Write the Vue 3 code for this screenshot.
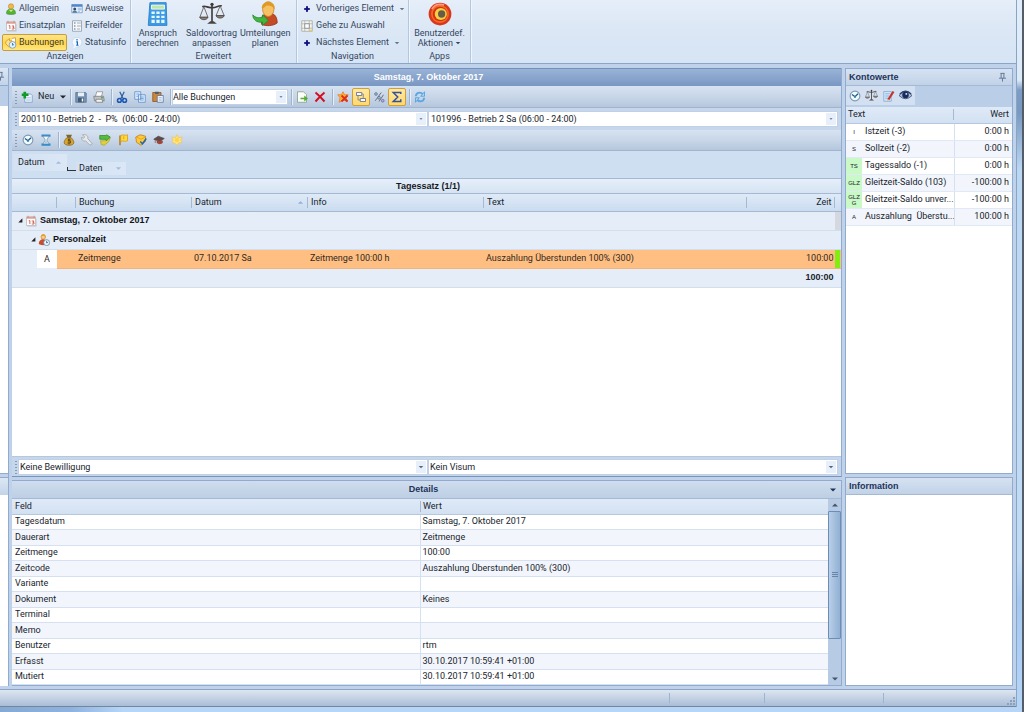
<script setup>
import { h, ref } from 'vue'

const art = {
  person: '<ellipse cx="8" cy="15" rx="6" ry="1" fill="#b9c8d8"/><path d="M2 14c0-5 3-6 6-6s6 1 6 6c-3 1.500-9 1.500-12 0z" fill="#55b52d" stroke="#2e8718" stroke-width=".7"/><path d="M5 9l3 3 3-3" fill="#c4eda0"/><circle cx="8" cy="4.500" r="3.500" fill="#f2b84f" stroke="#b87920" stroke-width=".7"/>',
  calendar: '<path d="M2 3h12v11H2z" fill="#fff" stroke="#b8b4b8"/><path d="M2 2h12v3H2z" fill="#e0a094"/><path d="M4 1v3M12 1v3" stroke="#999"/><path d="M5 7.500h1.500V12M9 8h3l-1.500 2h1.500v2H9" fill="none" stroke="#cc5a45" stroke-width="1.200"/><path d="M3 15h12V5" stroke="#c4c4cc" fill="none"/>',
  booking: '<path d="M1 6l5-4v3h3v8H5L1 9z" fill="#fce28b" stroke="#d39320"/><path d="M9 2l5-1v9h-3" fill="#fff" stroke="#c88d31"/><circle cx="10" cy="10.500" r="4.500" fill="#dff2ff" stroke="#7591ad"/><path d="M10 8v3l2-1" fill="none" stroke="#285f94"/>',
  card: '<path d="M1 2h14v11H1z" fill="#e8f3ff" stroke="#6a93c6"/><path d="M1 2h14v3H1z" fill="#4f86cc"/><circle cx="5" cy="8" r="2" fill="#394c66"/><path d="M2 13c0-4 6-4 6 0" fill="#5f7894"/><path d="M9 7h5M9 9h5M9 11h3" stroke="#7ba6d6"/>',
  fields: '<path d="M2 1h12v14H2z" fill="#f6f7f8" stroke="#8694a5"/><path d="M4 3h2v2H4zM4 7h2v2H4zM4 11h2v2H4z" fill="#879aac"/><path d="M8 4h5M8 8h5M8 12h4" stroke="#8595a5"/>',
  info: '<circle cx="8" cy="7" r="6.500" fill="#f4faff" stroke="#c1d5e8"/><path d="M4 12l-1 3 5-2" fill="#f4faff"/><path d="M8 2.500v2M7 6.500h1.500v5M7 11h3" stroke="#1661c3" stroke-width="1.600" fill="none"/>',
  diamond: '<path d="M8 3l4 5-4 5-4-5z" fill="#101080"/><path d="M2 8h12M8 2v12" stroke="#101080" stroke-width="3"/>',
  goto: '<path d="M1 1h14v14H1z" fill="#f7f4e8" stroke="#9ea4a8"/><path d="M1 5h14M1 11h14M5 1v14M11 1v14" stroke="#9b9fa6" stroke-width=".8"/><path d="M5 5h6v6H5z" fill="#fff" stroke="#788088"/><path d="M11 13h4v2h-4z" fill="#e8cc5c"/>',
  calc: '<path d="M6 2h20l1 28H4z" fill="#3d9be4" stroke="#237cc8"/><path d="M8 5h16v5H8z" fill="#bfe6a8" stroke="#fff"/><path d="M8 13h4v3H8zM14 13h4v3h-4zM20 13h4v3h-4zM8 18h4v3H8zM14 18h4v3h-4zM20 18h4v3h-4zM8 23h4v4H8zM14 23h4v4h-4zM20 23h4v4h-4z" fill="#e5f7ff"/>',
  scales: '<path d="M16 3v23M4 7c4-2 7 2 12 1 4 1 8-3 12-2" stroke="#403a38" stroke-width="2" fill="none"/><circle cx="16" cy="4" r="2" fill="#403a38"/><path d="M10 28h12l-4-3h-4z" fill="#4a4240"/><path d="M6 7L1 20h10L6 7M26 6l-5 12h10L26 6" fill="none" stroke="#5b514d"/><path d="M1 20c1 4 9 4 10 0zM21 18c1 4 9 4 10 0z" fill="#8e8178" stroke="#4a4240"/>',
  transfer: '<path d="M12 29c-2-9 1-14 9-14s10 6 10 12c-5 4-14 4-19 2z" fill="#c54b24" stroke="#8f3219"/><ellipse cx="20" cy="10" rx="7" ry="9" fill="#f6c164" stroke="#c68830"/><path d="M12 9c0-11 17-11 16 1-3-4-8-5-11-4-1 2-3 2-5 3z" fill="#e19926"/><path d="M1 17c3 4 8 4 12 3v-3l7 7-7 6v-4C6 27 1 23 1 17z" fill="#43b63f" stroke="#238b2c"/>',
  target: '<circle cx="16" cy="16" r="14" fill="#d8371d"/><circle cx="16" cy="16" r="11" fill="#ef6d25"/><circle cx="16" cy="16" r="9" fill="#d92e16"/><circle cx="17" cy="16" r="7.500" fill="#f4d046"/><circle cx="18" cy="16" r="4.500" fill="#665d45"/><path d="M6 10Q11 2 21 5" stroke="#ff9c7d" stroke-width="2" fill="none"/>',
  add: '<path d="M5 4h8l2 2v9H5z" fill="#e8f3ff" stroke="#7598c8"/><path d="M7 9h6M7 12h6" stroke="#9bb6d8"/><path d="M5 1v9M1 5h9" stroke="#129a28" stroke-width="3.500"/>',
  save: '<path d="M1 2h13l1 1v12H1z" fill="#7695b8" stroke="#55708f"/><path d="M4 2h8v5H4z" fill="#e8f0f6"/><path d="M4 9h8v6H4z" fill="#445b74"/><path d="M9 10h2v4H9z" fill="#fff"/>',
  print: '<path d="M5 1h8l-2 7H3z" fill="#fff" stroke="#888"/><path d="M1 7h13l1 6H2z" fill="#c2c4c7" stroke="#75797e"/><path d="M4 11h8l1 4H4z" fill="#f4f5ec" stroke="#777"/><path d="M11 9h2" stroke="#35a04a" stroke-width="2"/>',
  cut: '<path d="M5 1l5 10M11 1L6 11" stroke="#355f9c" stroke-width="1.700"/><circle cx="4.500" cy="12.500" r="2.500" fill="none" stroke="#1957b3" stroke-width="2"/><circle cx="11.500" cy="12.500" r="2.500" fill="none" stroke="#1957b3" stroke-width="2"/>',
  copy: '<path d="M1 1h8v10H1zM6 5h9v10H6z" fill="#e0efff" stroke="#5586c6"/><path d="M3 4h4M3 7h3M8 8h5M8 10h5M8 12h5" stroke="#5e91cb"/>',
  paste: '<path d="M1 2h11v12H1z" fill="#cc8738" stroke="#86511c"/><path d="M4 1h5v3H4z" fill="#555f69"/><path d="M7 6h8v9H7z" fill="#eef5ff" stroke="#526f9e"/><path d="M9 9h4M9 12h4" stroke="#809bbe"/>',
  exportDoc: '<path d="M2 1h8l4 4v10H2z" fill="#fbfff8" stroke="#829780"/><path d="M6 9h5V6l5 4-5 4v-3H6z" fill="#51ad35"/>',
  cross: '<path d="M2 2q5 4 12 12M14 2Q8 7 2 14" stroke="#d20f20" stroke-width="2.600" fill="none"/>',
  starX: '<path d="M1 5l5 0 2-4 2 4h5l-3 4 2 5-6-2-5 3 1-6z" fill="#ffb52b" stroke="#e77925"/><path d="M6 6l8 8M14 6l-8 8" stroke="#e02d20" stroke-width="2.500"/>',
  tree: '<path d="M2 2h7v4H2zM7 10h7v4H7z" fill="#f5f8fc" stroke="#596273"/><path d="M4 6v6h3M9 4h2v6" stroke="#68788b" fill="none"/>',
  percent: '<path d="M3 13L11 2M8 14l6-9" stroke="#5b6570" stroke-width="1.200"/><circle cx="4" cy="4" r="1.800" fill="#acc0d6" stroke="#566b83"/><circle cx="8" cy="9" r="1.800" fill="#acc0d6" stroke="#566b83"/><circle cx="13" cy="13" r="1.800" fill="#b5b3db" stroke="#66609b"/>',
  sigma: '<path d="M13 4V2H3l6 6-6 6h10v-3" stroke="#36519a" stroke-width="2" fill="none"/>',
  refresh: '<path d="M2.500 7c0-5 6-6 9-3M13.500 9c0 5-6 6-9 3" fill="none" stroke="#59a6e2" stroke-width="2.400"/><path d="M14 1v6H9zM2 15V9h5z" fill="#a9d8fa" stroke="#4698d8"/>',
  clock: '<circle cx="8" cy="8" r="6.500" fill="#eefaff" stroke="#8199b1" stroke-width="1.500"/><path d="M4 6l4 3 4-4" fill="none" stroke="#255783" stroke-width="1.700"/><circle cx="8" cy="9" r="1.500" fill="#2f80ad"/>',
  hourglass: '<path d="M2 2h12M2 14h12" stroke="#318bce" stroke-width="3"/><path d="M4 3h8L9 8l3 5H4l3-5z" fill="#effaff" stroke="#7395ad"/><path d="M8 8l3 5H5z" fill="#b4cbdc"/>',
  money: '<path d="M5 5c-5 5-5 10 3 10s8-5 3-10z" fill="#daa42b" stroke="#806322"/><path d="M4 1h8l-2 4H6z" fill="#7c6331"/><path d="M10 7H7v2h3v3H6M8 6v8" stroke="#493d24" fill="none"/>',
  wrench: '<path d="M2 1l3 3-2 2-2-2c-1 5 3 6 5 5l6 6 3-2-6-7c1-4-3-6-7-5z" fill="#e6e8e9" stroke="#999fa5"/>',
  arrows: '<path d="M2 9h7V6l6-1-2 5-6 5-4-1z" fill="#e5cf38" stroke="#a3a832"/><path d="M1 2h8l1-1 5 3-5 5-1-2H1z" fill="#55bd40" stroke="#31892b"/>',
  flag: '<path d="M4 2v13" stroke="#b47a16" stroke-width="2"/><path d="M5 2c4-2 5 1 9-1v8c-4 2-5-1-9 1z" fill="#ffdc33" stroke="#d5961f"/><path d="M9 3v4" stroke="#d19421"/>',
  shield: '<path d="M1 4l6-3 7 2v7l-6 5-6-4z" fill="#ffca38" stroke="#bd7517"/><path d="M2 4l6 3 6-3" fill="none" stroke="#e39722"/><path d="M7 10l3 3 5-7" fill="none" stroke="#226bb1" stroke-width="2"/>',
  cap: '<path d="M1 7l6-4 8 3-6 4z" fill="#5d4a49" stroke="#594846"/><path d="M5 9h8v3c-2 2-6 2-8 0z" fill="#a24439"/><path d="M3 8v4" stroke="#71635a"/>',
  sun: '<path d="M8 1l2 4 5-1-2 4 2 3-5 1-2 3-3-3-4-1 2-3-2-4 5 1z" fill="#ffe584" stroke="#f0c659"/><circle cx="8" cy="8" r="3" fill="#ffd64a"/>',
  staff: '<circle cx="7" cy="4" r="3" fill="#f7c98d" stroke="#d78a1d"/><path d="M4 3c1-4 7-3 6 1-2-2-3-2-6-1" fill="#e59d21"/><path d="M1 13c0-8 11-8 11 0-2 2-8 3-11 0z" fill="#ca4c2a"/><circle cx="11.500" cy="11.500" r="4" fill="#eaf8ff" stroke="#5c7fa1"/><path d="M11.500 9v3l2-1" stroke="#355777" fill="none"/>',
  edit: '<path d="M1 2h10v13H1z" fill="#cfe5fb" stroke="#83a8d0"/><path d="M3 5h6M3 8h5M3 11h4" stroke="#7ca5d0"/><path d="M14 2l-7 11" stroke="#c5342f" stroke-width="3"/><path d="M6 12l-1 3 3-2" fill="#eebb80"/>',
  eye: '<path d="M0 8q8-10 16 0-8 8-16 0z" fill="#b1bdd3" stroke="#394d78"/><circle cx="8" cy="7.500" r="4" fill="#192c60"/><circle cx="9" cy="6" r="1.200" fill="#d8e8ff"/><path d="M1 6q7-7 14 0" fill="none" stroke="#293e67" stroke-width="1.500"/>',
  pin: '<path d="M5 2h6M6 2v7M10 2v7M3 9h10M8 9v5" fill="none" stroke="#5a708e" stroke-width="1.300"/>',
  fold: '<path d="M14 1v13H1z" fill="#222"/>',
  down: '<path d="M2 5h12L8 11z" fill="currentColor"/>',
  up: '<path d="M2 11h12L8 5z" fill="currentColor"/>',
}
const Icon = (p) =>
  h('svg', {
    width: p.size || 12,
    height: p.size || 12,
    viewBox: p.large ? '0 0 32 32' : '0 0 16 16',
    'aria-hidden': 'true',
    innerHTML: art[p.name],
  })
Icon.props = { name: String, size: Number, large: Boolean }

const views = [
  ['person', 'Allgemein'], ['card', 'Ausweise'],
  ['calendar', 'Einsatzplan'], ['fields', 'Freifelder'],
  ['booking', 'Buchungen'], ['info', 'Statusinfo'],
]
const activeView = ref('Buchungen')
const extended = [
  ['calc', 'Anspruch', 'berechnen'],
  ['scales', 'Saldovortrag', 'anpassen'],
  ['transfer', 'Umteilungen', 'planen'],
]
const editTools = [['save', 'Speichern'], ['print', 'Drucken'], null, ['cut', 'Ausschneiden'], ['copy', 'Kopieren'], ['paste', 'Einfügen'], null]
const listTools = [null, ['exportDoc', 'Exportieren'], ['cross', 'Löschen'], null, ['starX', 'Filter aufheben'], ['tree', 'Gruppieren', true], ['percent', 'Prozent'], ['sigma', 'Summen', true], null, ['refresh', 'Aktualisieren']]
const typeTools = [['clock', 'Zeit'], ['hourglass', 'Dauer'], null, ['money', 'Spesen'], ['wrench', 'Korrektur'], ['arrows', 'Umbuchung'], ['flag', 'Markierung'], ['shield', 'Bewilligung'], ['cap', 'Ausbildung'], ['sun', 'Feiertag']]
const accounts = [
  ['I', 'Istzeit (-3)', '0:00 h'],
  ['S', 'Sollzeit (-2)', '0:00 h'],
  ['TS', 'Tagessaldo (-1)', '0:00 h', true],
  ['GLZ', 'Gleitzeit-Saldo (103)', '-100:00 h', true],
  ['GLZ\nG', 'Gleitzeit-Saldo unver...', '-100:00 h', true],
  ['A', 'Auszahlung  Überstu...', '100:00 h'],
]
const details = [
  ['Tagesdatum', 'Samstag, 7. Oktober 2017'], ['Dauerart', 'Zeitmenge'], ['Zeitmenge', '100:00'],
  ['Zeitcode', 'Auszahlung Überstunden 100% (300)'], ['Variante', ''], ['Dokument', 'Keines'],
  ['Terminal', ''], ['Memo', ''], ['Benutzer', 'rtm'],
  ['Erfasst', '30.10.2017 10:59:41 +01:00'], ['Mutiert', '30.10.2017 10:59:41 +01:00'],
]
</script>

<template>
  <div class="desktop">
    <div class="window">
      <header class="ribbon">
        <section class="group g-view">
          <div class="views">
            <button v-for="v in views" :key="v[1]" :class="{ active: activeView === v[1] }" @click="activeView = v[1]"><Icon :name="v[0]" /><span>{{ v[1] }}</span></button>
          </div>
          <h2>Anzeigen</h2>
        </section>
        <section class="group g-ext">
          <div class="bigs">
            <button v-for="e in extended" :key="e[1]" class="big"><Icon :name="e[0]" :size="26" large /><span>{{ e[1] }}<br />{{ e[2] }}</span></button>
          </div>
          <h2>Erweitert</h2>
        </section>
        <section class="group g-nav">
          <div class="navs">
            <button><Icon name="diamond" :size="8" /><span>Vorheriges Element</span><Icon name="down" :size="6" /></button>
            <button><Icon name="goto" /><span>Gehe zu Auswahl</span></button>
            <button><Icon name="diamond" :size="8" /><span>Nächstes Element</span><Icon name="down" :size="6" /></button>
          </div>
          <h2>Navigation</h2>
        </section>
        <section class="group g-apps">
          <div class="bigs">
            <button class="big"><Icon name="target" :size="26" large /><span>Benutzerdef.<br />Aktionen <Icon name="down" :size="6" /></span></button>
          </div>
          <h2>Apps</h2>
        </section>
      </header>

      <div class="workspace">
        <aside class="stub">
          <div class="stub-top"><div class="stub-head"><Icon name="pin" :size="11" /></div><div class="stub-tools"></div></div>
          <div class="stub-bottom"><div class="stub-head"></div></div>
        </aside>

        <main class="center">
          <section class="bookings">
            <h1>Samstag, 7. Oktober 2017</h1>
            <div class="toolbar">
              <i class="grip"></i>
              <button class="new"><Icon name="add" /><span>Neu</span><Icon name="down" :size="8" /></button>
              <i class="sep"></i>
              <template v-for="(t, i) in editTools" :key="i"><button v-if="t" class="tool" :aria-label="t[1]"><Icon :name="t[0]" /></button><i v-else class="sep"></i></template>
              <label class="combo filter"><select aria-label="Filter"><option>Alle Buchungen</option></select><Icon name="down" :size="5" /></label>
              <template v-for="(t, i) in listTools" :key="'l' + i"><button v-if="t" class="tool" :class="{ on: t[2] }" :aria-label="t[1]"><Icon :name="t[0]" /></button><i v-else class="sep"></i></template>
            </div>
            <div class="pair">
              <i class="grip"></i>
              <label class="combo"><select aria-label="Arbeitsplan"><option>200110 - Betrieb 2&nbsp; -&nbsp; P%&nbsp; (06:00 - 24:00)</option></select><Icon name="down" :size="5" /></label>
              <label class="combo"><select aria-label="Tagesplan"><option>101996 - Betrieb 2 Sa (06:00 - 24:00)</option></select><Icon name="down" :size="5" /></label>
            </div>
            <div class="toolbar types">
              <i class="grip"></i>
              <template v-for="(t, i) in typeTools" :key="i"><button v-if="t" class="tool" :aria-label="t[1]"><Icon :name="t[0]" /></button><i v-else class="sep"></i></template>
            </div>
            <div class="grouping">
              <button class="chip">Datum <Icon name="up" :size="7" /></button>
              <i class="elbow"></i>
              <button class="chip low">Daten <Icon name="down" :size="7" /></button>
            </div>
            <h2 class="band">Tagessatz (1/1)</h2>
            <table class="records">
              <colgroup><col class="c1" /><col class="c2" /><col class="c3" /><col class="c3" /><col class="c5" /><col /><col class="c7" /><col class="c8" /></colgroup>
              <thead>
                <tr><th><span></span></th><th><span></span></th><th><span>Buchung</span></th><th><span>Datum<Icon name="up" :size="7" /></span></th><th><span>Info</span></th><th><span>Text</span></th><th class="num"><span>Zeit</span></th><th></th></tr>
              </thead>
              <tbody>
                <tr class="node"><td colspan="7"><div class="l1"><Icon name="fold" :size="5" /><Icon name="calendar" /><b>Samstag, 7. Oktober 2017</b></div></td><td class="thumb"></td></tr>
                <tr class="node"><td colspan="8"><div class="l2"><Icon name="fold" :size="5" /><Icon name="staff" /><b>Personalzeit</b></div></td></tr>
                <tr class="hit"><td class="kind"><span>A</span></td><td></td><td>Zeitmenge</td><td>07.10.2017 Sa</td><td>Zeitmenge 100:00 h</td><td>Auszahlung Überstunden 100% (300)</td><td class="num">100:00</td><td class="ok"></td></tr>
                <tr class="sum"><td colspan="7" class="num"><b>100:00</b></td><td></td></tr>
              </tbody>
            </table>
            <div class="blank"></div>
            <div class="pair approve">
              <i class="grip"></i>
              <label class="combo"><select aria-label="Bewilligung"><option>Keine Bewilligung</option></select><Icon name="down" :size="6" /></label>
              <label class="combo"><select aria-label="Visum"><option>Kein Visum</option></select><Icon name="down" :size="6" /></label>
            </div>
          </section>

          <section class="details">
            <div class="details-head"><h2>Details</h2><button aria-label="Menü"><Icon name="down" :size="8" /></button></div>
            <div class="details-body">
              <table>
                <thead><tr><th>Feld</th><th><span>Wert</span></th></tr></thead>
                <tbody><tr v-for="d in details" :key="d[0]"><td>{{ d[0] }}</td><td>{{ d[1] }}</td></tr></tbody>
              </table>
              <div class="scroll">
                <button aria-label="Nach oben"><Icon name="up" :size="8" /></button>
                <div class="track"><div class="handle"><i></i></div></div>
                <button aria-label="Nach unten"><Icon name="down" :size="8" /></button>
              </div>
            </div>
          </section>
        </main>

        <aside class="side">
          <section class="accounts">
            <div class="side-head"><h2>Kontowerte</h2><Icon name="pin" :size="11" /></div>
            <div class="side-tools">
              <div>
                <button aria-label="Zeit"><Icon name="clock" /></button>
                <button aria-label="Saldo"><Icon name="scales" :size="13" large /></button>
                <button aria-label="Bearbeiten"><Icon name="edit" /></button>
                <button aria-label="Anzeigen"><Icon name="eye" :size="13" /></button>
              </div>
            </div>
            <table>
              <colgroup><col class="a1" /><col /><col class="a3" /></colgroup>
              <thead><tr><th colspan="2"><span>Text</span></th><th class="num">Wert</th></tr></thead>
              <tbody><tr v-for="a in accounts" :key="a[1]"><td class="tag" :class="{ green: a[3] }">{{ a[0] }}</td><td class="name">{{ a[1] }}</td><td class="num">{{ a[2] }}</td></tr></tbody>
            </table>
          </section>
          <section class="information"><div class="side-head"><h2>Information</h2></div></section>
        </aside>
      </div>

      <footer class="status"><i></i><i></i><i></i><svg width="10" height="10" viewBox="0 0 10 10" aria-hidden="true"><path d="M7 1h2v2H7zM7 4h2v2H7zM4 4h2v2H4zM7 7h2v2H7zM4 7h2v2H4zM1 7h2v2H1z" fill="#8ba1bb" /></svg></footer>
    </div>
    <div class="glass-bottom"></div>
  </div>
</template>

<style>
html, body, #app { height: 100%; margin: 0; }
body { overflow: hidden; }
</style>

<style scoped>
.desktop { height: 100%; box-sizing: border-box; display: flex; flex-direction: column; border-right: 2px solid #555d69; background: linear-gradient(#e2edf9 0, #dce9f7 80px, #7c9dc5 90px, #7898c0 112px, #bcd7f2 170px, #c2dbf5 560px, #a5c8ef 600px, #b6d6f8 100%); font-family: Roboto, "Liberation Sans", sans-serif; font-size: 9px; line-height: 11px; color: #20242c; }
.desktop *, .desktop *::before { box-sizing: border-box; }
.window { flex: 1; min-height: 0; margin-right: 5px; display: flex; flex-direction: column; border-right: 1px solid #8aa4c4; background: #bfd2ea; }
h1, h2, b { margin: 0; font-family: "Liberation Sans", sans-serif; font-size: 9px; line-height: 11px; }
button { border: 0; padding: 0; background: none; font: inherit; color: inherit; display: flex; align-items: center; }
svg { flex: none; }
table { border-collapse: collapse; border-spacing: 0; table-layout: fixed; width: 100%; }
th, td { padding: 0; text-align: left; font-weight: 400; white-space: nowrap; overflow: hidden; }
.num { text-align: right; }

.ribbon { height: 64px; flex: none; display: flex; background: linear-gradient(#e5eef9, #dbe7f5 50%, #d6e4f4); border-bottom: 1px solid #8ba5c8; color: #34465f; }
.group { border-right: 1px solid #b5c7de; box-shadow: 1px 0 #eff5fc; display: flex; flex-direction: column; }
.group h2 { margin-top: auto; height: 12px; font: inherit; text-align: center; }
.g-view { width: 131px; }
.g-ext { width: 166px; }
.g-nav { width: 112px; }
.g-apps { width: 62px; }
.views { display: grid; grid-template-columns: 66px 1fr; grid-auto-rows: 17px; padding-left: 2px; }
.views button { gap: 2px; padding-left: 2px; border: 1px solid transparent; white-space: nowrap; }
.views .active { border-color: #c99b3a; border-radius: 2px; background: linear-gradient(#fde58c, #ffd54e 55%, #ffe77e); width: 65px; color: #433c2c; }
.bigs { display: flex; justify-content: center; padding-top: 1px; }
.g-ext .bigs { padding-right: 4px; }
.big { flex-direction: column; width: 54px; text-align: center; line-height: 10px; gap: 1px; white-space: nowrap; }
.navs { display: grid; grid-auto-rows: 17px; padding-left: 4px; }
.navs button { gap: 3px; white-space: nowrap; }
.navs button > svg:first-child { width: 12px; }
.navs button > svg:last-child { margin-left: 2px; color: #65758c; }

.workspace { flex: 1; min-height: 0; display: flex; padding-top: 4px; }
.stub { width: 9px; display: flex; flex-direction: column; gap: 3px; border-right: 1px solid #91abd0; }
.stub-top { flex: 1; background: #fff; border-bottom: 1px solid #91abd0; }
.stub-bottom { height: 209px; background: #fff; border-top: 1px solid #91abd0; }
.stub-head { height: 17px; background: linear-gradient(#dbe7f5, #c3d3e8); overflow: hidden; }
.stub-head svg { display: block; margin: 3px 0 0 -5px; }
.stub-tools { height: 21px; background: #bacee8; border-top: 1px solid #91abd0; }
.center { flex: 1; min-width: 0; margin-left: 3px; display: flex; flex-direction: column; gap: 3px; }
.bookings { flex: 1; min-height: 0; display: flex; flex-direction: column; background: #cfdef0; border-bottom: 1px solid #7894bd; border-right: 1px solid #91abd0; }
h1 { height: 18px; line-height: 17px; padding-left: 4px; text-align: center; color: #fff; background: linear-gradient(#9ab3d6, #7997c4); border-top: 1px solid #6f8fbd; }
.toolbar { height: 22px; display: flex; align-items: center; padding-left: 2px; background: linear-gradient(#d7e3f1, #c8d6e8 50%, #b6c7dd); border-bottom: 1px solid #a1b4cf; }
.grip { width: 4px; height: 14px; flex: none; background: radial-gradient(circle, #839bba 1px, transparent 1px) 0 0 / 4px 3px; }
.sep { width: 1px; height: 16px; margin: 0 1px 0 3px; background: #9eb3cf; box-shadow: 1px 0 #e6eef8; flex: none; }
.new { width: 49px; gap: 5px; padding-left: 3px; }
.tool { width: 18px; height: 18px; justify-content: center; flex: none; }
.tool.on { background: linear-gradient(#ffe9a4, #ffd870); border: 1px solid #d29e38; border-radius: 2px; }
.combo { position: relative; display: block; background: #fff; border: 1px solid #c0d1e7; min-width: 0; }
.combo select { appearance: none; width: 100%; height: 14px; border: 0; padding: 0 12px 0 2px; background: transparent; font: inherit; line-height: 14px; color: inherit; display: block; }
.combo svg { position: absolute; right: 1px; top: 1px; height: 12px; padding: 0 3px; width: 10px; background: #e6effa; color: #52647c; pointer-events: none; }
.approve .combo svg { padding: 0 2px; }
.filter { width: 116px; }
.filter select { padding-left: 0; }
.pair { height: 22px; display: flex; align-items: center; padding: 0 3px 0 2px; background: #c6d7ec; }
.pair .combo { flex: 1; height: 16px; }
.types { height: 21px; }
.types .grip { margin-right: 1px; }
.grouping { height: 27px; display: flex; align-items: flex-start; padding: 3px 1px; background: #cfdff2; }
.chip { width: 54px; height: 17px; padding: 0 5px; justify-content: space-between; background: linear-gradient(90deg, #d3e1f3, #dbe7f5); color: #20242c; }
.chip svg { color: #9ebce2; }
.elbow { width: 9px; height: 4px; margin-top: 13px; border-left: 1px solid #333; border-bottom: 1px solid #333; }
.chip.low { width: 50px; height: 13px; margin-top: 8px; padding: 0 4px 0 3px; }
.band { height: 16px; line-height: 15px; padding-left: 3px; text-align: center; background: linear-gradient(#e6effa, #d5e3f2); border-top: 1px solid #a5b9d3; border-bottom: 1px solid #a5b9d3; color: #15181e; }

.records { flex: none; }
.c1 { width: 45px; } .c2 { width: 19px; } .c3 { width: 116px; } .c5 { width: 176px; } .c7 { width: 88px; } .c8 { width: 6px; }
.records th { height: 17px; padding: 0; background: linear-gradient(#dfeaf7, #cbdcf0); border-bottom: 1px solid #a5b9d3; }
.records th span { display: flex; justify-content: space-between; align-items: center; height: 11px; padding: 0 3px; border-right: 1px solid #a5b9d3; }
.records th.num span { justify-content: flex-end; padding-right: 2px; }
.records th svg { color: #8fb0dc; }
.records td { height: 19px; padding: 0 2px; }
.records tbody tr { background: #e5edf8; }
.node td { border-bottom: 1px solid #d3deec; }
.node td > div { display: flex; align-items: center; gap: 2px; color: #101318; }
.node b { margin-left: 1px; }
.records .l1 { padding-left: 4px; }
.records .l2 { padding-left: 17px; }
.records .thumb { background: #d5d9df; }
.records .hit td { background: #ffbf82; border-bottom: 1px solid #f0b47b; color: #33291f; }
.records .hit .kind { padding: 0 0 0 25px; background: #e5edf8; border-color: #e5edf8; }
.kind span { display: block; height: 18px; line-height: 18px; background: #fff; text-align: center; }
.records .hit .num, .records .sum .num { padding-right: 1px; }
.records .hit .ok { background: #82ee0d; border-right: 1px solid #ffbf82; }
.sum td { border-bottom: 1px solid #d3deec; }
.blank { flex: 1; background: #fff; }
.approve { height: 20px; border-top: 1px solid #b5c8e0; }
.approve .combo select { padding-left: 1px; }

.details { height: 206px; flex: none; display: flex; flex-direction: column; border: 1px solid #91abd0; border-left-width: 0; background: #fff; }
.details-head { height: 18px; flex: none; display: flex; align-items: center; padding: 0 4px 0 6px; background: linear-gradient(#cfdded, #bdcfe5); border-bottom: 1px solid #a5b9d3; color: #1e3358; }
.details-head h2 { flex: 1; text-align: center; }
.details-body { flex: 1; min-height: 0; display: flex; overflow: hidden; }
.details th { height: 15px; padding: 0 3px; background: linear-gradient(#dfeaf7, #d2e1f2); border-bottom: 1px solid #b5c8e0; }
.details th + th { padding: 0; }
.details th span { display: block; border-left: 1px solid #a5b9d3; padding-left: 2px; }
.details td { height: 15px; padding: 0 3px; border-bottom: 1px solid #d5e1f1; }
.details td + td { padding-left: 2px; border-left: 1px solid #d5e1f1; }
.details tr:nth-child(even) td { height: 16px; background: #f2f6fc; }
.details thead th:first-child, .details th:last-child { width: 50%; }
.details-body table { flex: 1; align-self: flex-start; }
.scroll { width: 13px; flex: none; display: flex; flex-direction: column; background: #b7cbe4; color: #44566f; }
.scroll button { height: 12px; justify-content: center; flex: none; }
.track { flex: 1; }
.handle { height: 79%; border: 1px solid #6c8db8; border-radius: 1px; background: linear-gradient(90deg, #b9cfe8, #91b0d3); display: flex; align-items: center; justify-content: center; }
.handle i { width: 6px; height: 6px; background: repeating-linear-gradient(#6785ab 0 1px, transparent 1px 2px); }

.side { width: 168px; flex: none; margin: 0 3px; display: flex; flex-direction: column; gap: 3px; }
.side section { border: 1px solid #91abd0; background: #fff; }
.accounts { flex: 1; min-height: 0; }
.side .information { height: 209px; flex: none; }
.side-head { height: 17px; display: flex; align-items: center; justify-content: space-between; padding: 0 4px 0 3px; background: linear-gradient(#d6e2f1, #c1d2e8); border-bottom: 1px solid #a5b9d3; color: #1e3358; }
.side-tools { height: 21px; background: #bacee8; }
.side-tools div { display: flex; width: 69px; height: 19px; background: #d2e0f2; }
.side-tools button { width: 17px; justify-content: center; }
.a1 { width: 16px; } .a3 { width: 58px; }
.accounts th { height: 16px; background: linear-gradient(#dfeaf7, #d2e1f2); border-bottom: 1px solid #b5c8e0; }
.accounts th span { display: block; padding-left: 2px; border-right: 1px solid #a5b9d3; }
.accounts th, .accounts td { padding-right: 3px; }
.accounts th:first-child { padding-right: 0; }
.accounts td { height: 17px; border-bottom: 1px solid #e0e9f5; }
.accounts td.name { padding: 0 0 0 3px; border-right: 1px solid #d5e1f1; white-space: pre; }
.accounts tr:nth-child(even) td { background: #f2f6fc; }
.accounts td.tag { padding: 0; font-family: "Liberation Sans", sans-serif; font-size: 6px; line-height: 6px; text-align: center; white-space: pre-line; }
.accounts tr td.green { background: #c8f9c6; }

.status { height: 18px; flex: none; margin-top: 3px; display: grid; grid-template-columns: 670fr 95fr 119fr 132fr; align-items: center; background: linear-gradient(#dce6f2, #c4d2e4 50%, #aabdd6); border-top: 1px solid #8ba5c8; border-bottom: 1px solid #71869f; }
.status i { height: 10px; border-right: 1px solid #9eb3cf; }
.status svg { justify-self: end; align-self: end; }
.glass-bottom { height: 5px; flex: none; background: linear-gradient(90deg, #86a9d3, #8fb3de 7%, #b6d5f7 12%, #b6d5f7); }
</style>
